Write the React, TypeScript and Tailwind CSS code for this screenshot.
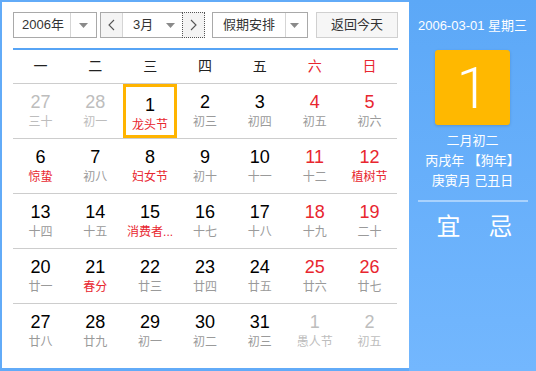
import React from "react";

type Day = { n: number; l: string; other?: boolean; redNum?: boolean; redL?: boolean; sel?: boolean };

const rows: Day[][] = [
  [
    { n: 27, l: "三十", other: true },
    { n: 28, l: "初一", other: true },
    { n: 1, l: "龙头节", redL: true, sel: true },
    { n: 2, l: "初三" },
    { n: 3, l: "初四" },
    { n: 4, l: "初五", redNum: true },
    { n: 5, l: "初六", redNum: true },
  ],
  [
    { n: 6, l: "惊蛰", redL: true },
    { n: 7, l: "初八" },
    { n: 8, l: "妇女节", redL: true },
    { n: 9, l: "初十" },
    { n: 10, l: "十一" },
    { n: 11, l: "十二", redNum: true },
    { n: 12, l: "植树节", redNum: true, redL: true },
  ],
  [
    { n: 13, l: "十四" },
    { n: 14, l: "十五" },
    { n: 15, l: "消费者...", redL: true },
    { n: 16, l: "十七" },
    { n: 17, l: "十八" },
    { n: 18, l: "十九", redNum: true },
    { n: 19, l: "二十", redNum: true },
  ],
  [
    { n: 20, l: "廿一" },
    { n: 21, l: "春分", redL: true },
    { n: 22, l: "廿三" },
    { n: 23, l: "廿四" },
    { n: 24, l: "廿五" },
    { n: 25, l: "廿六", redNum: true },
    { n: 26, l: "廿七", redNum: true },
  ],
  [
    { n: 27, l: "廿八" },
    { n: 28, l: "廿九" },
    { n: 29, l: "初一" },
    { n: 30, l: "初二" },
    { n: 31, l: "初三" },
    { n: 1, l: "愚人节", other: true },
    { n: 2, l: "初五", other: true },
  ],
];

const weekdays = ["一", "二", "三", "四", "五", "六", "日"];

const Caret = () => (
  <svg width="9" height="5" viewBox="0 0 9 5">
    <path d="M0 0 L9 0 L4.5 5 Z" fill="#8a8a8a" />
  </svg>
);

const Chevron = ({ dir }: { dir: "l" | "r" }) => (
  <svg width="7" height="12" viewBox="0 0 7 12">
    <path
      d={dir === "l" ? "M6 1 L1 6 L6 11" : "M1 1 L6 6 L1 11"}
      fill="none"
      stroke="#555"
      strokeWidth="1.1"
    />
  </svg>
);

export default function App() {
  return (
    <div
      className="flex w-[536px] h-[371px] overflow-hidden"
      style={{ fontFamily: '"Liberation Sans", "Noto Sans CJK SC", sans-serif' }}
    >
      {/* Left calendar */}
      <div className="w-[409px] h-[371px] bg-white border-l-2 border-t-2 border-b-[3px] border-[#62abf8] pl-[11px] pr-[10px] pt-[10px]">
        {/* toolbar */}
        <div className="flex items-center h-[26px] text-[13px] text-[#333]">
          <div className="flex h-[26px] w-[84px] border border-[#a9a9a9] bg-white">
            <div className="flex-1 flex items-center pl-[8px]">2006年</div>
            <div className="w-[26px] border-l border-[#d5d5d5] flex items-center justify-center">
              <Caret />
            </div>
          </div>
          <div className="flex h-[26px] w-[105px] ml-[3px] border border-[#a9a9a9] bg-white">
            <div className="w-[22px] bg-[#f4f4f4] border-r border-[#d5d5d5] flex items-center justify-center">
              <Chevron dir="l" />
            </div>
            <div className="flex-1 flex items-center justify-between pl-[10px] pr-[7px]">
              <span>3月</span>
              <Caret />
            </div>
            <div className="w-[23px] bg-[#f4f4f4] border border-dotted border-[#555] -my-px -mr-px flex items-center justify-center">
              <Chevron dir="r" />
            </div>
          </div>
          <div className="flex h-[26px] w-[96px] ml-[7px] border border-[#a9a9a9] bg-white">
            <div className="flex-1 flex items-center pl-[10px]">假期安排</div>
            <div className="w-[16px] mr-[1px] border-l border-[#d5d5d5] flex items-center justify-center pl-[1px]">
              <Caret />
            </div>
            <div className="w-[5px]" />
          </div>
          <div className="flex h-[26px] w-[82px] ml-[8px] border border-[#d0d0d0] bg-[#f6f6f6] items-center justify-center">
            返回今天
          </div>
        </div>

        {/* blue line */}
        <div className="mt-[10px] h-[2px] bg-[#57a4f5] w-[385px]" />

        {/* weekdays */}
        <div className="grid grid-cols-7 w-[384px] h-[33px] items-center text-[14px]">
          {weekdays.map((w, i) => (
            <div key={w} className={`text-center ${i >= 5 ? "text-[#e8262f]" : "text-[#222]"}`}>
              {w}
            </div>
          ))}
        </div>

        {/* days */}
        <div className="w-[384px]">
          {rows.map((row, ri) => (
            <div key={ri} className="grid grid-cols-7 h-[55px] border-t border-[#cdcdcd]">
              {row.map((d, di) => {
                const numColor = d.other ? "text-[#bdbdbd]" : d.redNum ? "text-[#e8262f]" : "text-black";
                const lColor = d.other ? "text-[#bdbdbd]" : d.redL ? "text-[#e8262f]" : "text-[#9a9a9a]";
                return (
                  <div key={di} className="flex justify-center">
                    <div
                      className={`w-[54px] h-[54px] flex flex-col items-center pt-[7px] ${
                        d.sel ? "border-[3px] border-[#ffb400] pt-[4px]" : ""
                      }`}
                    >
                      <div className={`text-[18px] leading-[22px] ${numColor}`}>{d.n}</div>
                      <div className={`text-[12px] leading-[16px] mt-[1px] whitespace-nowrap ${lColor}`}>{d.l}</div>
                    </div>
                  </div>
                );
              })}
            </div>
          ))}
        </div>
      </div>

      {/* Right panel */}
      <div className="w-[127px] h-[371px] bg-gradient-to-b from-[#5ca8f7] to-[#73b7fe] flex flex-col items-center text-white">
        <div className="mt-[17px] text-[13px] leading-[18px]">2006-03-01 星期三</div>
        <div
          className="mt-[15px] w-[75px] h-[75px] bg-[#ffb800] rounded-[3px] shadow-[0_1px_3px_rgba(0,0,0,0.15)] flex items-center justify-center text-[58px] font-light leading-none"
          style={{ fontFamily: 'Roboto, "Liberation Sans", sans-serif' }}
        >
          1
        </div>
        <div className="mt-[6px] text-[13px] leading-[20px]">二月初二</div>
        <div className="text-[13px] leading-[20px]">丙戌年 【狗年】</div>
        <div className="text-[13px] leading-[20px]">庚寅月 己丑日</div>
        <div className="mt-[9px] w-[110px] h-[2px] bg-[#a9d2fd]" />
        <div className="mt-[10px] flex w-full justify-center gap-[28px] pl-[4px] text-[24px] leading-[30px]">
          <span>宜</span>
          <span>忌</span>
        </div>
      </div>
    </div>
  );
}
